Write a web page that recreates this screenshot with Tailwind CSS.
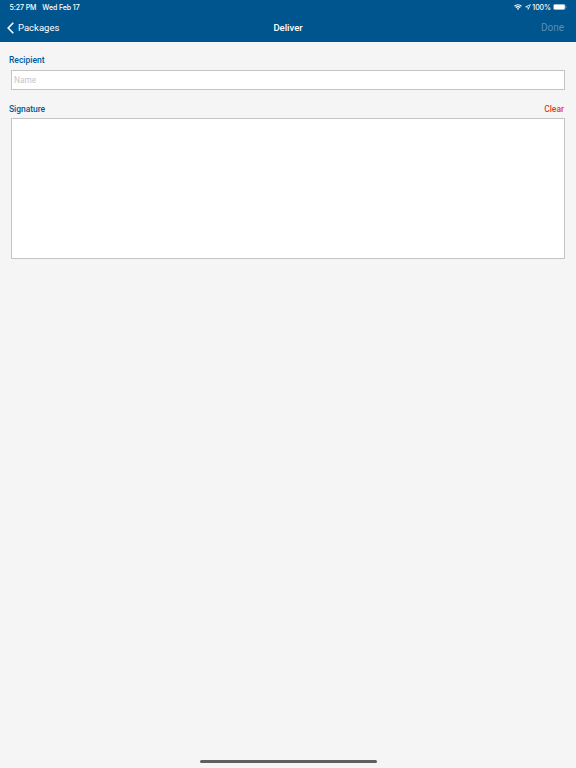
<!DOCTYPE html>
<html lang="en">
<head>
  <meta charset="UTF-8" />
  <meta name="viewport" content="width=device-width, initial-scale=1.0" />
  <title>Deliver</title>
  <script src="https://cdn.jsdelivr.net/npm/@tailwindcss/browser@4"></script>
</head>
<body class="h-screen flex flex-col overflow-hidden bg-[#f5f5f5] font-[Roboto,sans-serif]">
  <header class="h-[42px] shrink-0 bg-[#00558f] text-white">
    <!-- Status bar -->
    <div class="h-[14px] flex items-center justify-between pl-[9.5px] pr-[9px] font-[Inter,sans-serif] text-[7px] font-medium leading-[14px]">
      <div class="flex gap-[6px] pt-px">
        <span class="tracking-[-0.1px]">5:27 PM</span>
        <span class="tracking-[-0.08px]">Wed Feb 17</span>
      </div>
      <div class="flex items-center">
        <svg class="w-[8px] h-[6px] mr-[3px]" viewBox="0 0 16 12" fill="none" stroke="currentColor" stroke-width="2.5">
          <path d="M1 4.5C5 .6 11 .6 15 4.5M3.6 7.3c2.5-2.4 6.3-2.4 8.8 0" />
          <path d="M8 11.8 5.7 9.4c1.3-1.2 3.3-1.2 4.6 0z" fill="currentColor" stroke="none" />
        </svg>
        <svg class="w-[6px] h-[6px] mr-px" viewBox="0 0 10 10" fill="none" stroke="currentColor" stroke-width="1.2" stroke-linejoin="round">
          <path d="M9 1 1 4.8l4.1.1.1 4.1z" />
        </svg>
        <span class="mr-[2px] pt-px tracking-[-0.05px]">100%</span>
        <svg class="w-[14px] h-[6px]" viewBox="0 0 14 6">
          <rect x=".25" y=".25" width="12" height="5.5" rx="1.6" fill="none" stroke="currentColor" stroke-opacity=".55" stroke-width=".5" />
          <rect x=".7" y=".6" width="11.1" height="4.8" rx="1.1" fill="currentColor" />
          <path d="M12.9 2q.8.3.8 1t-.8 1z" fill="currentColor" fill-opacity=".5" />
        </svg>
      </div>
    </div>
    <!-- Navigation bar -->
    <nav class="h-[28px] grid grid-cols-3 items-center pl-[7px] pr-[12px] text-[10px] leading-[28px]">
      <button class="flex items-center gap-[4px]">
        <svg class="w-[7px] h-[12px]" viewBox="0 0 7 12" fill="none" stroke="currentColor" stroke-width="1.6">
          <path d="M6.3.8 1.2 6l5.1 5.2" />
        </svg>
        <span class="text-[9.5px]">Packages</span>
      </button>
      <h1 class="text-center font-medium text-[9.5px] pl-[5px]">Deliver</h1>
      <button class="text-right text-white/35" disabled>Done</button>
    </nav>
  </header>
  <main class="px-[11px]">
    <label for="name" class="block -ml-[2px] mt-[11px] h-[14px] text-[8.5px] leading-[14px] font-medium text-[#005a9a]">Recipient</label>
    <input id="name" type="text" placeholder="Name" class="block mt-[3px] w-full h-[20px] border border-[#c4c4c4] bg-white px-[2px] text-[8.3px] placeholder:text-[#c6c6c8]" />
    <div class="flex justify-between mt-[12px] h-[14px] -ml-[2px] mr-px text-[8.5px] leading-[14px] font-medium">
      <span class="tracking-[-0.05px] text-[#005a9a]">Signature</span>
      <button class="text-[#e8392c]">Clear</button>
    </div>
    <div class="mt-[2px] h-[141px] border border-[#c4c4c4] bg-white"></div>
  </main>
  <div class="mt-auto mb-[5px] mx-auto w-[177px] h-[3px] shrink-0 rounded-full bg-[#606060]"></div>
</body>
</html>
